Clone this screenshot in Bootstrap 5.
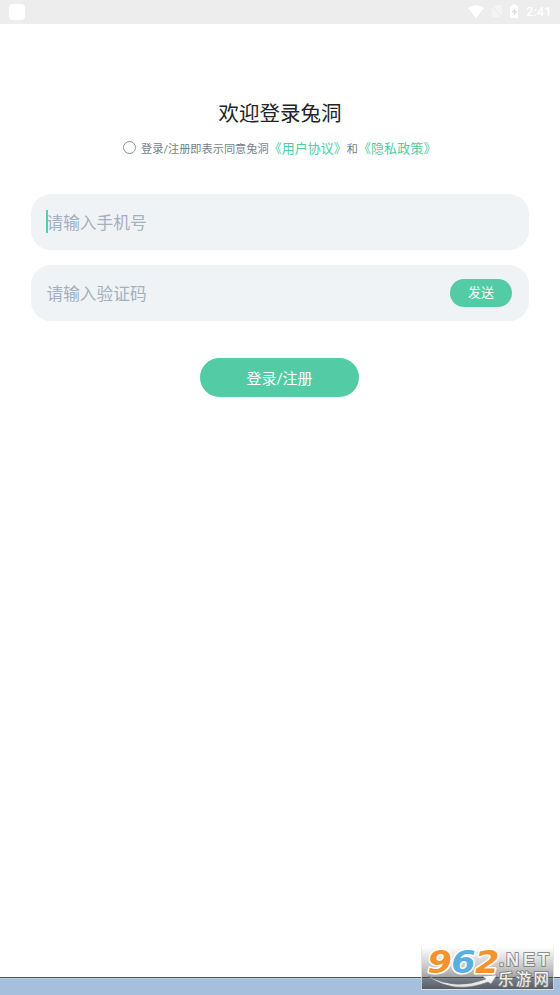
<!DOCTYPE html>
<html lang="zh-CN">
<head>
<meta charset="utf-8">
<meta name="viewport" content="width=device-width, initial-scale=1">
<title>欢迎登录兔洞</title>
<link href="https://cdn.jsdelivr.net/npm/bootstrap@5.3.0/dist/css/bootstrap.min.css" rel="stylesheet">
<style>
body{font-family:Roboto,"Noto Sans CJK SC",sans-serif;height:995px;overflow:hidden;background:#fff}
.status-bar{height:24px;background:#ededed;padding:0 8px 0 9px}
.status-app{width:16px;height:16px;border-radius:4px;background:#fff}
.status-time{font-size:13px;line-height:26px;margin-left:6px;color:#fff;width:26px;white-space:nowrap;font-weight:500}
.page-title{font-size:20.5px;line-height:30px;margin:75px 0 0;color:#212326;font-weight:400}
.agreement{font-size:11.2px;line-height:20px;height:21px;margin:10px 0 0 121px;color:#737f8b;white-space:nowrap}
.agreement span{padding-top:1px}
.agree-ring{width:13px;height:13px;border:1px solid #8594a1;border-radius:50%;margin:-4px 5px 0 2px;background:none;appearance:none}
.agreement a{font-size:13px;color:#52cba3;margin-top:-1px}
.agreement a:last-child{letter-spacing:.1px}
.login-form{padding:34px 31px 0}
.field{height:56px;border-radius:20px;background:#eff3f6;padding:0 17px 0 15px}
.field+.field{margin-top:15px}
.field input{font-size:16.7px;color:#333;padding:3px 0 0 .5px;outline:0;line-height:24px}
.field input::placeholder{color:#a3b0bd;opacity:1}
.caret{width:2px;height:23px;background:#5ccba6;margin-right:-2px;margin-top:-1px}
.btn-mint,.btn-mint:hover{background:#53cca6;color:#fff;border:0}
.btn-send{width:62px;height:28px;font-size:13px;line-height:28px}
.btn-login{width:159px;height:39px;font-size:15px;line-height:20px;margin:37px 1px 0 0}
.btn-login.btn{padding-top:2px!important}
.bottom-strip{height:18px;background:#a6bfdc;border-top:1px solid #4b535e;box-shadow:inset 0 1px #bfcedf}
.site-mark{left:420px;top:945px}
</style>
</head>
<body class="d-flex flex-column position-relative">
<header class="status-bar d-flex align-items-center flex-shrink-0">
  <span class="status-app"></span>
  <svg class="ms-auto" width="54" height="24" viewBox="0 0 54 24" fill="#fff">
    <path d="M2 8Q10 2.500 18 8L10 18Z"/>
    <path d="M26 17V8l3-3h7v12z" fill="#f4f4f4"/><path d="M26 6l10 11" stroke="#e8e8e8"/>
    <path d="M44 6h2V4.500h4V6h2v12h-8z"/><path d="M49.500 7.500l-4 5h2.500v3.500l3.500-5H49z" fill="#dedede"/>
  </svg>
  <span class="status-time">2:41</span>
</header>
<main class="flex-grow-1">
  <h1 class="page-title text-center">欢迎登录兔洞</h1>
  <div class="agreement d-flex align-items-center">
    <input type="radio" class="agree-ring" aria-label="同意">
    <span>登录/注册即表示同意兔洞</span><a href="#" class="text-decoration-none">《用户协议》</a><span>和</span><a href="#" class="text-decoration-none">《隐私政策》</a>
  </div>
  <form class="login-form d-flex flex-column">
    <div class="field d-flex align-items-center">
      <span class="caret"></span>
      <input class="border-0 bg-transparent flex-grow-1" type="tel" placeholder="请输入手机号">
    </div>
    <div class="field d-flex align-items-center">
      <input class="border-0 bg-transparent flex-grow-1" type="text" placeholder="请输入验证码">
      <button type="button" class="btn btn-mint btn-send rounded-pill p-0">发送</button>
    </div>
    <button type="button" class="btn btn-mint btn-login rounded-pill p-0 align-self-center">登录/注册</button>
  </form>
</main>
<footer class="bottom-strip flex-shrink-0"></footer>
<svg class="site-mark position-absolute" width="140" height="50" viewBox="0 0 140 50" overflow="visible">
  <defs>
    <linearGradient id="shade" x1="0" y1="0" x2="0" y2="1"><stop offset="0" stop-color="#555" stop-opacity="0"/><stop offset=".5" stop-color="#555" stop-opacity=".35"/><stop offset="1" stop-color="#333" stop-opacity=".7"/></linearGradient>
    <linearGradient id="silver" x1="0" y1="0" x2="0" y2="1"><stop offset="0" stop-color="#fff"/><stop offset="1" stop-color="#dedede"/></linearGradient>
  </defs>
  <rect x="1" y="2" width="133" height="42" fill="url(#shade)"/>
  <path d="M1.500 2V44.500H133.500V2" fill="none" stroke="#e3e6e9" stroke-opacity=".8"/>
  <path d="M8 31Q35 46 66 34L62 31L77 30L71 39L68 37Q34 50 8 31Z" fill="url(#silver)" stroke="#777" stroke-width=".5"/>
  <g transform="translate(7.500 27.500) scale(1.080 1)" font-family="DejaVu Sans,sans-serif" font-size="32.500" font-weight="700" font-style="italic" stroke-linejoin="round">
    <text x="0 22 44" y="0" stroke="#fff" stroke-width="3" paint-order="stroke"><tspan fill="#f6922c">9</tspan><tspan fill="#58afe0">6</tspan><tspan fill="#f6922c">2</tspan></text>
  </g>
  <g fill="url(#silver)" stroke="#777" stroke-width="1.600" paint-order="stroke" font-weight="700">
    <text x="79 86 103 118" y="21" font-size="18" font-family="Liberation Sans,sans-serif">.NET</text>
    <text x="78" y="39.500" font-size="15.500" font-weight="500" font-family="Noto Sans CJK SC,sans-serif" textLength="51">乐游网</text>
  </g>
</svg>
<script src="https://cdn.jsdelivr.net/npm/bootstrap@5.3.0/dist/js/bootstrap.bundle.min.js"></script>
</body>
</html>
